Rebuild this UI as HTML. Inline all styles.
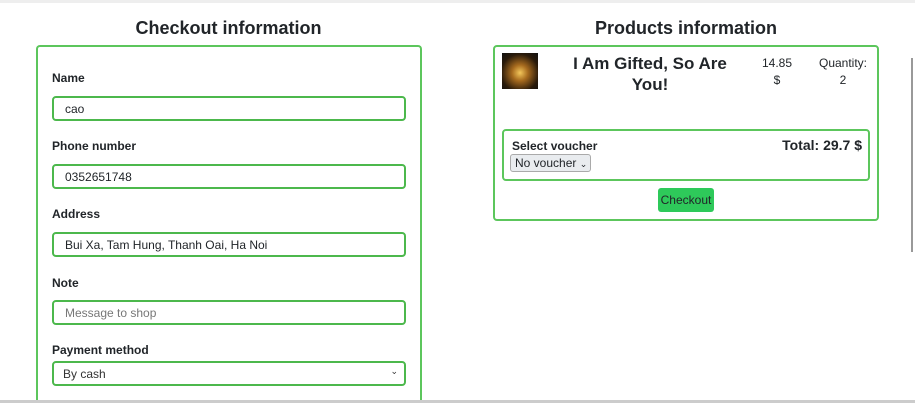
<!DOCTYPE html>
<html style="overflow:hidden;height:403px"><head><style>
*{box-sizing:border-box;margin:0;padding:0}
body{width:915px;height:403px;background:#fff;position:relative;overflow:hidden;font-family:"Liberation Sans",sans-serif;color:#212529}
.a{position:absolute}
h2{position:absolute;font-size:18px;font-weight:bold;text-align:center}
.box{position:absolute;border:2px solid #5cc65c;border-radius:4px}
.lbl{position:absolute;left:52px;font-size:12px;font-weight:bold}
.inp{position:absolute;left:52px;width:354px;height:25px;border:2px solid #4cb84c;border-radius:4px;font-size:12px;padding:4px 0 0 11px}
</style></head><body>
<div class="a" style="left:0;top:0;width:915px;height:3px;background:#eee"></div>
<div class="a" style="left:36px;top:45px;width:386px;height:358px;border:2px solid #5cc65c;border-bottom:none;border-radius:4px 4px 0 0"></div>
<div class="a" style="left:0;top:400px;width:915px;height:3px;background:#ccc"></div>
<div class="a" style="left:911px;top:58px;width:2px;height:194px;background:#999"></div>

<h2 style="left:36px;width:385px;top:18px">Checkout information</h2>
<div class="lbl" style="top:71px">Name</div>
<div class="inp" style="top:96px">cao</div>
<div class="lbl" style="top:139px">Phone number</div>
<div class="inp" style="top:164px">0352651748</div>
<div class="lbl" style="top:207px">Address</div>
<div class="inp" style="top:232px">Bui Xa, Tam Hung, Thanh Oai, Ha Noi</div>
<div class="lbl" style="top:276px">Note</div>
<div class="inp" style="top:300px;color:#777">Message to shop</div>
<div class="lbl" style="top:343px">Payment method</div>
<div class="inp" style="top:361px;padding-left:9px;color:#333">By cash<span style="position:absolute;right:6px;top:3px;font-size:9px">&#8964;</span></div>

<h2 style="left:493px;width:386px;top:18px">Products information</h2>
<div class="box" style="left:493px;top:45px;width:386px;height:176px"></div>
<div class="a" style="left:502px;top:53px;width:36px;height:36px;background:radial-gradient(circle at 50% 55%,#f3c65a 0,#a66a1e 30%,#2a1a0a 70%,#111 100%)"></div>
<div class="a" style="left:560px;top:53px;width:180px;text-align:center;font-size:17px;font-weight:bold;line-height:21px">I Am Gifted, So Are You!</div>
<div class="a" style="left:757px;top:55px;width:40px;text-align:center;font-size:12px;line-height:17px">14.85<br>$</div>
<div class="a" style="left:813px;top:55px;width:60px;text-align:center;font-size:12px;line-height:17px">Quantity:<br>2</div>
<div class="box" style="left:502px;top:129px;width:368px;height:52px"></div>
<div class="a" style="left:512px;top:139px;font-size:12px;font-weight:bold">Select voucher</div>
<div class="a" style="left:510px;top:154px;width:81px;height:18px;background:#e9ecef;border:1px solid #aaa;border-radius:3px;font-size:12px;padding:1px 0 0 4px">No voucher <span style="font-size:9px">&#8964;</span></div>
<div class="a" style="left:760px;top:137px;width:102px;text-align:right;font-size:14px;font-weight:bold">Total: 29.7 $</div>
<div class="a" style="left:658px;top:188px;width:56px;height:24px;background:#2ec95a;border-radius:3px;font-size:12px;text-align:center;line-height:24px">Checkout</div>
</body></html>
